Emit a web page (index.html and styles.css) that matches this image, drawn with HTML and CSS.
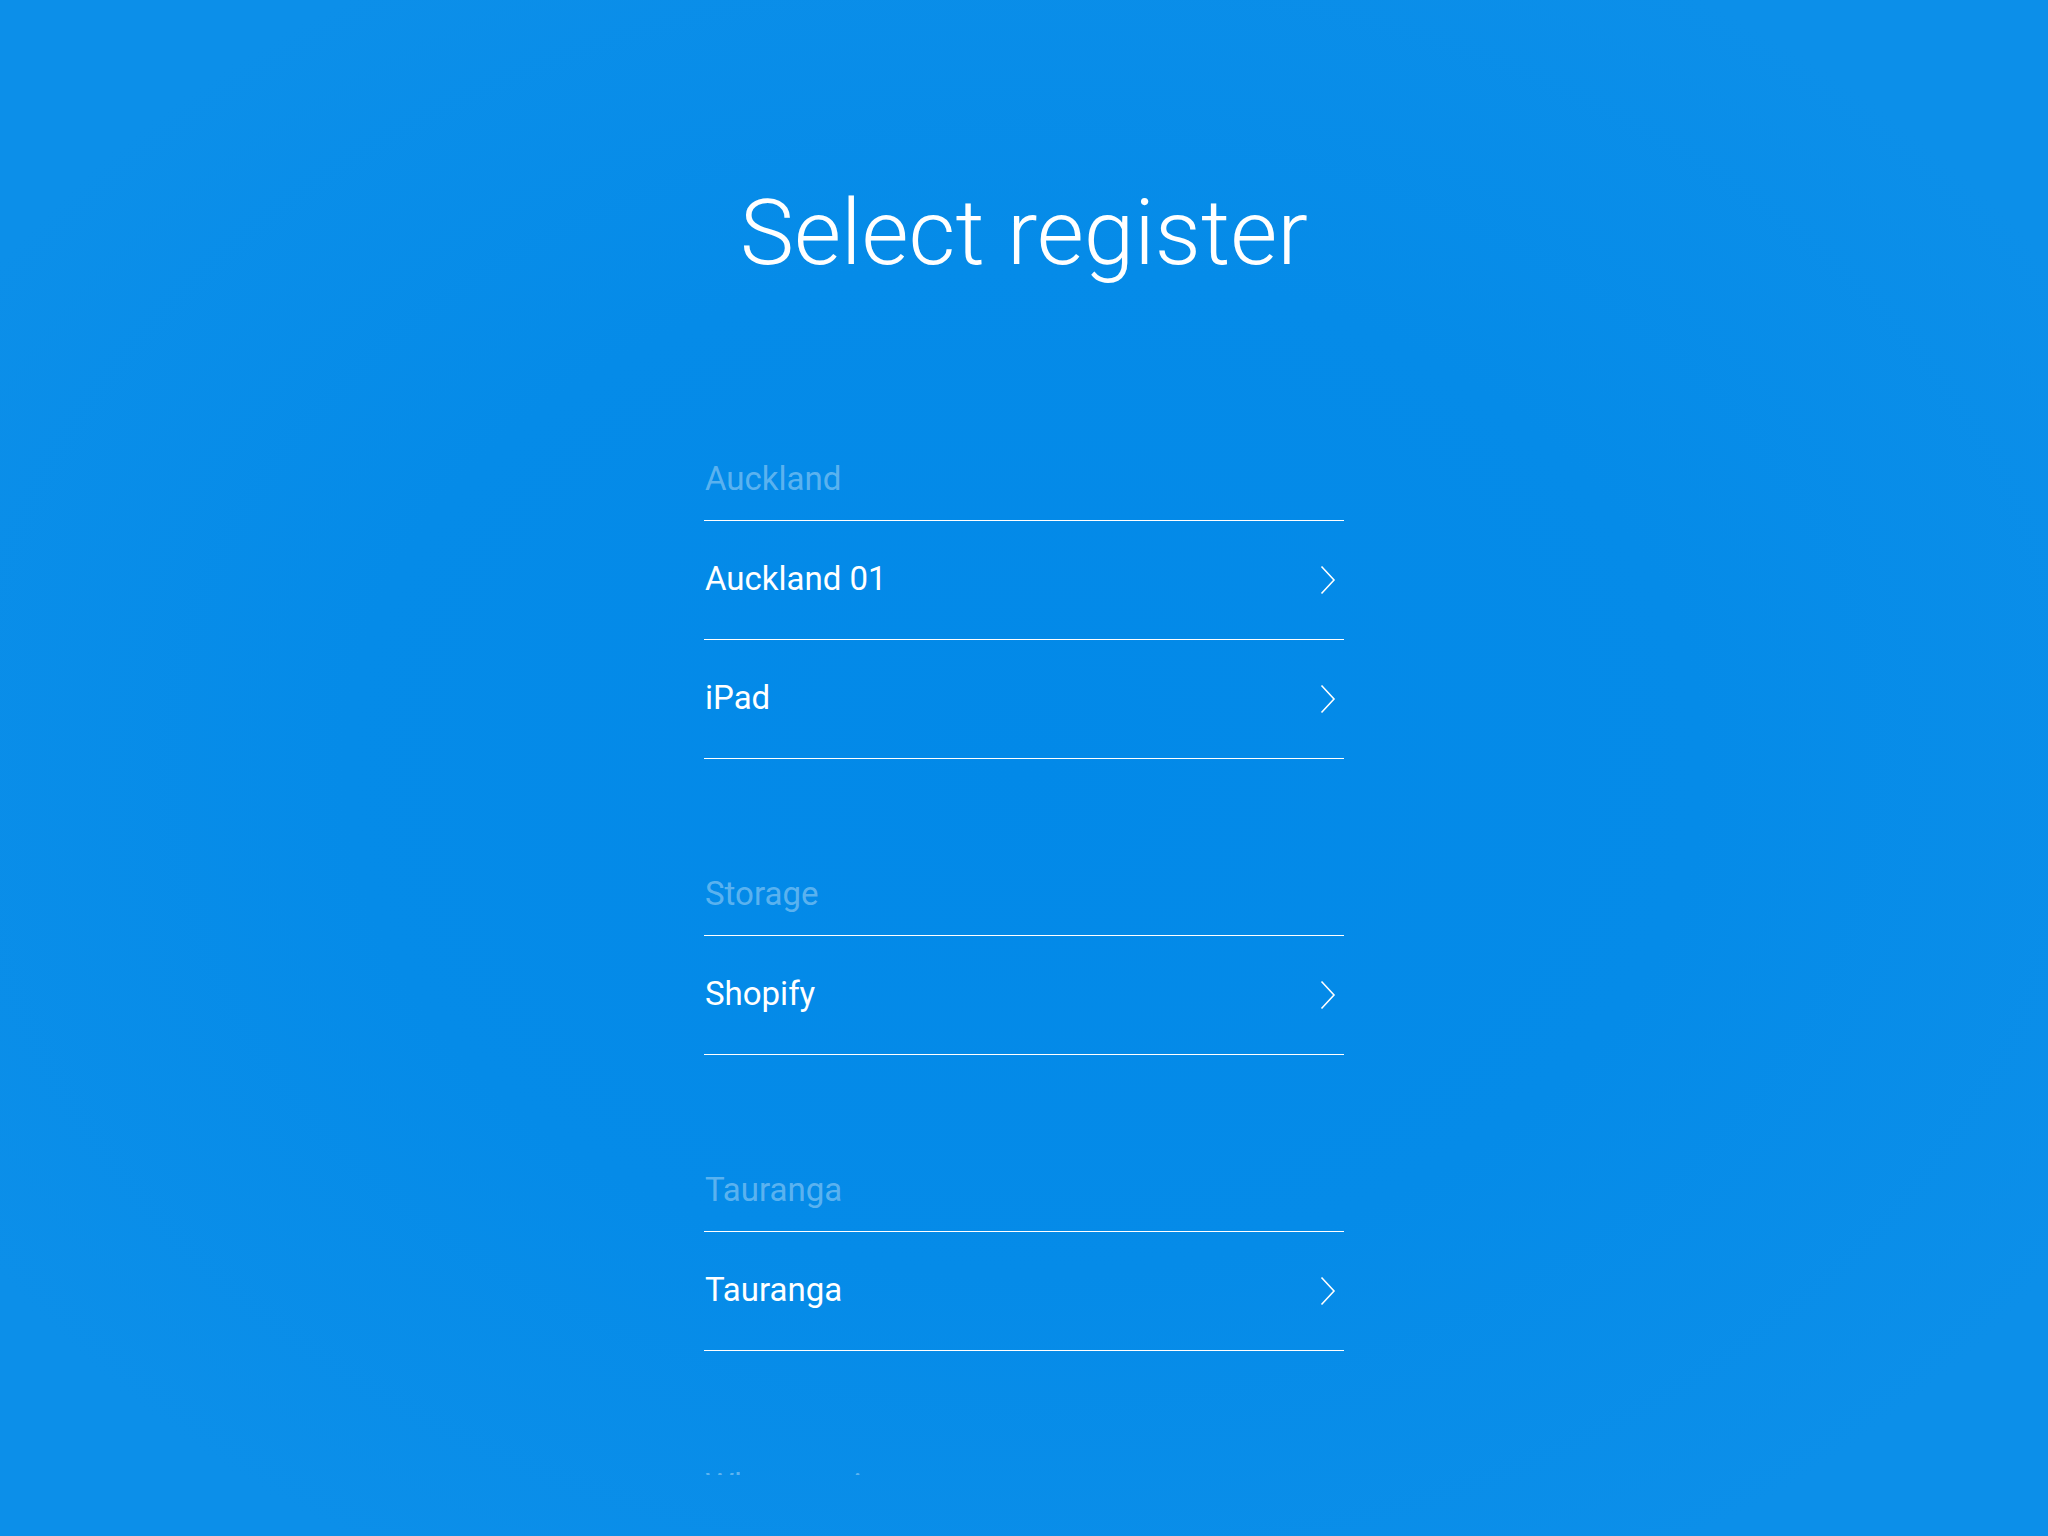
FILE: index.html
```html
<!DOCTYPE html>
<html lang="en">
<head>
<meta charset="utf-8">
<title>Select register</title>
<link rel="stylesheet" href="styles.css">
</head>
<body>
<main class="screen">
  <h1 class="title">Select register</h1>
  <div class="list">
    <section class="group">
      <div class="group-header">Auckland</div>
      <div class="row"><span class="row-label">Auckland 01</span><svg class="chevron" width="16" height="30" viewBox="0 0 16 30"><polyline points="1.5,1.5 14,15 1.5,28.5" fill="none" stroke="#fff" stroke-width="1.6"/></svg></div>
      <div class="row"><span class="row-label">iPad</span><svg class="chevron" width="16" height="30" viewBox="0 0 16 30"><polyline points="1.5,1.5 14,15 1.5,28.5" fill="none" stroke="#fff" stroke-width="1.6"/></svg></div>
    </section>
    <section class="group">
      <div class="group-header">Storage</div>
      <div class="row"><span class="row-label">Shopify</span><svg class="chevron" width="16" height="30" viewBox="0 0 16 30"><polyline points="1.5,1.5 14,15 1.5,28.5" fill="none" stroke="#fff" stroke-width="1.6"/></svg></div>
    </section>
    <section class="group">
      <div class="group-header">Tauranga</div>
      <div class="row"><span class="row-label">Tauranga</span><svg class="chevron" width="16" height="30" viewBox="0 0 16 30"><polyline points="1.5,1.5 14,15 1.5,28.5" fill="none" stroke="#fff" stroke-width="1.6"/></svg></div>
    </section>
    <section class="group">
      <div class="group-header">Whangarei</div>
      <div class="row"><span class="row-label">Whangarei</span><svg class="chevron" width="16" height="30" viewBox="0 0 16 30"><polyline points="1.5,1.5 14,15 1.5,28.5" fill="none" stroke="#fff" stroke-width="1.6"/></svg></div>
    </section>
  </div>
</main>
</body>
</html>
```

FILE: styles.css
```css
html, body {
  margin: 0;
  padding: 0;
  height: 100%;
}

body {
  width: 2048px;
  height: 1536px;
  overflow: hidden;
  background: radial-gradient(ellipse 60% 60% at 50% 50%, #0289e8 0%, #058be8 55%, #0c8fe9 100%);
  font-family: Roboto, "Liberation Sans", sans-serif;
  color: #fff;
}

.screen {
  display: flex;
  flex-direction: column;
  align-items: center;
  padding-top: 188px;
}

.title {
  margin: 0;
  font-size: 91px;
  line-height: 91px;
  font-weight: 300;
  letter-spacing: 0;
  color: #fff;
}

.list {
  width: 640px;
  margin-top: 183px;
  height: 1013px;
  overflow: hidden;
}

.group + .group {
  margin-top: 118px;
}

.group-header {
  font-size: 33px;
  line-height: 33px;
  padding: 0 0 25px 1px;
  border-bottom: 1px solid #fff;
  color: rgba(255, 255, 255, 0.36);
}

.row {
  display: flex;
  align-items: center;
  justify-content: space-between;
  height: 118px;
  padding: 0 8px 0 1px;
  border-bottom: 1px solid #fff;
  box-sizing: content-box;
}

.row-label {
  font-size: 33px;
  line-height: 33px;
  margin-top: -3px;
  color: #fff;
}

.chevron {
  display: block;
  flex: none;
}
```
